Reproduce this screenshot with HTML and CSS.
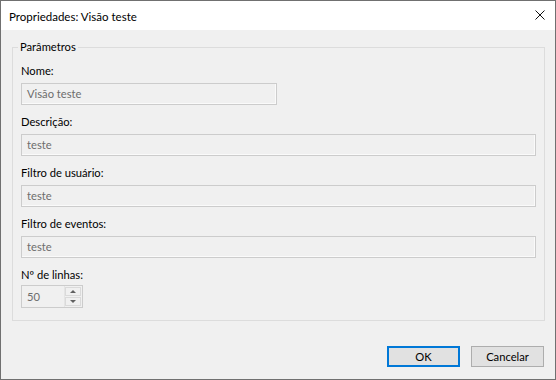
FILE: index.html
```html
<!DOCTYPE html>
<html lang="pt">
<head>
    <meta charset="UTF-8">
    <title>Propriedades: Visão teste</title>
    <link rel="stylesheet" href="styles.css">
</head>
<body>
    <div class="window">
        <div class="titlebar">
            <span class="title">Propriedades: Visão teste</span>
            <svg class="close" width="10" height="10" viewBox="0 0 10 10">
                <path d="M0.5 0.5 L9.5 9.5 M9.5 0.5 L0.5 9.5" stroke="#111" stroke-width="1" fill="none"/>
            </svg>
        </div>
        <div class="content">
            <fieldset class="group">
                <legend>Parâmetros</legend>
                <label class="field-label">Nome:</label>
                <div class="textbox short">Visão teste</div>
                <label class="field-label">Descrição:</label>
                <div class="textbox">teste</div>
                <label class="field-label">Filtro de usuário:</label>
                <div class="textbox">teste</div>
                <label class="field-label">Filtro de eventos:</label>
                <div class="textbox">teste</div>
                <label class="field-label spinner-label">Nº de linhas:</label>
                <div class="spinner">
                    <span class="spinner-value">50</span>
                    <div class="spin-buttons">
                        <span class="spin-btn"><span class="arrow-up"></span></span>
                        <span class="spin-btn"><span class="arrow-down"></span></span>
                    </div>
                </div>
            </fieldset>
            <div class="footer">
                <button class="button button-default">OK</button>
                <button class="button">Cancelar</button>
            </div>
        </div>
    </div>
</body>
</html>
```

FILE: styles.css
```css
body {
    margin: 0;
    font-family: Lato, "Liberation Sans", sans-serif;
    font-size: 11.2px;
    color: #000;
}
.window {
    width: 556px;
    height: 380px;
    box-sizing: border-box;
    border: 1px solid #707070;
    background: #f0f0f0;
    display: flex;
    flex-direction: column;
}
.titlebar {
    height: 29px;
    background: #ffffff;
    display: flex;
    align-items: center;
    justify-content: space-between;
    padding: 0 10px 0 8px;
}
.title {
    font-size: 11.5px;
    line-height: 15px;
    margin-top: 1px;
}
.close {
    display: block;
    margin-top: -1px;
}
.content {
    flex: 1;
    display: flex;
    flex-direction: column;
}
.group {
    margin: 10px 10px 0 11px;
    padding: 0 8px 12px 8px;
    border: 1px solid #dcdcdc;
    min-width: 0;
}
.group legend {
    padding: 0 2px;
    margin-left: -3px;
    line-height: 14px;
}
.field-label {
    display: block;
    line-height: 15px;
    margin-top: 9px;
    margin-bottom: 5px;
}
.field-label.spinner-label {
    margin-bottom: 3px;
}
.textbox {
    height: 22px;
    box-sizing: border-box;
    border: 1px solid #cccccc;
    box-shadow: inset -1px -1px 0 #fafafa;
    background: #f0f0f0;
    color: #6d6d6d;
    line-height: 20px;
    padding-left: 5px;
}
.textbox.short {
    width: 256px;
}
.spinner {
    width: 62px;
    height: 23px;
    box-sizing: border-box;
    border: 1px solid #cccccc;
    background: #f0f0f0;
    display: flex;
    justify-content: space-between;
    color: #6d6d6d;
}
.spinner-value {
    line-height: 21px;
    padding-left: 5px;
}
.spin-buttons {
    width: 16px;
    display: flex;
    flex-direction: column;
    gap: 1px;
    padding: 1px 1px 1px 0;
    border-left: 1px solid #e4e4e4;
}
.spin-btn {
    flex: 1;
    display: flex;
    align-items: center;
    justify-content: center;
    border: 1px solid #dadada;
    background: #f0f0f0;
}
.arrow-up {
    width: 0;
    height: 0;
    border-left: 3px solid transparent;
    border-right: 3px solid transparent;
    border-bottom: 3px solid #606060;
}
.arrow-down {
    width: 0;
    height: 0;
    border-left: 3px solid transparent;
    border-right: 3px solid transparent;
    border-top: 3px solid #606060;
}
.footer {
    margin-top: auto;
    display: flex;
    justify-content: flex-end;
    gap: 11px;
    padding: 0 11px 12px 0;
}
.button {
    width: 73px;
    height: 21px;
    box-sizing: border-box;
    border: 1px solid #adadad;
    background: #e1e1e1;
    font-family: inherit;
    font-size: 11.2px;
    color: #000;
    padding: 0;
    line-height: 17px;
}
.button-default {
    border: 2px solid #0078d7;
}
```
